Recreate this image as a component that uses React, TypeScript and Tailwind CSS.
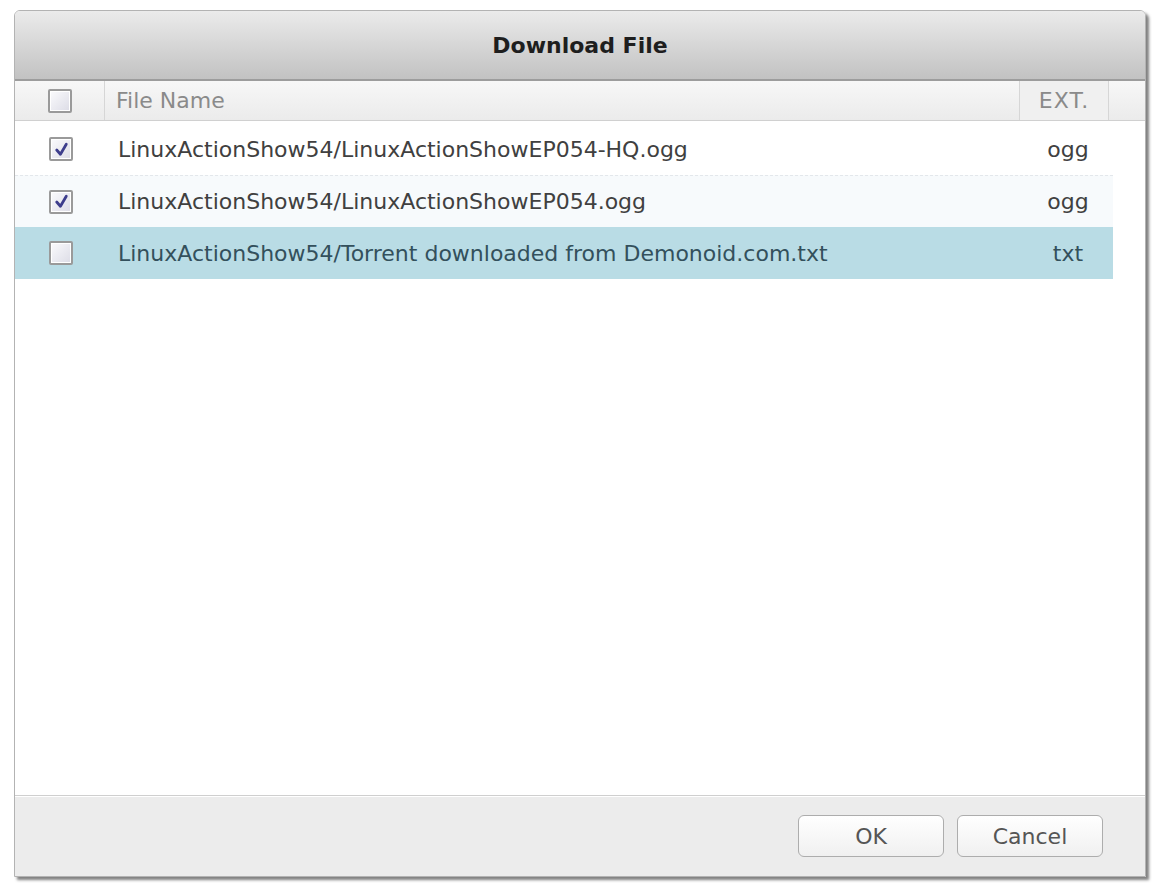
import React, { useState } from 'react';

interface FileRow {
  id: number;
  name: string;
  ext: string;
}

const files: FileRow[] = [
  { id: 1, name: 'LinuxActionShow54/LinuxActionShowEP054-HQ.ogg', ext: 'ogg' },
  { id: 2, name: 'LinuxActionShow54/LinuxActionShowEP054.ogg', ext: 'ogg' },
  { id: 3, name: 'LinuxActionShow54/Torrent downloaded from Demonoid.com.txt', ext: 'txt' },
];

const Check: React.FC<{ checked: boolean; onClick?: () => void }> = ({ checked, onClick }) => (
  <span
    onClick={onClick}
    className="flex h-[24px] w-[24px] cursor-pointer items-center justify-center rounded-[2px] border-2 border-[#9a9a9a] bg-gradient-to-br from-[#fbfbfd] to-[#dcdce6] shadow-[inset_0_0_0_1px_#ffffff]"
  >
    {checked && (
      <svg width="17" height="17" viewBox="0 0 16 16">
        <path d="M3.5 8.5 L7 12.5 L12.5 3" fill="none" stroke="#3d3d8c" strokeWidth="2.6" strokeLinecap="round" strokeLinejoin="round" />
      </svg>
    )}
  </span>
);

const App: React.FC = () => {
  const [checked, setChecked] = useState<Record<number, boolean>>({ 1: true, 2: true, 3: false });
  const selectedId = 3;

  return (
    <div className="h-[890px] w-[1156px] bg-white pl-[14px] pt-[10px]" style={{ fontFamily: '"DejaVu Sans", Verdana, sans-serif' }}>
      <div className="flex h-[867px] w-[1132px] flex-col overflow-hidden rounded-t-[6px] border border-[#b3b3b3] shadow-[3px_3px_3px_rgba(0,0,0,0.5)]">
        {/* Title bar */}
        <div className="flex h-[70px] shrink-0 items-center justify-center border-b-2 border-[#9c9c9c] bg-gradient-to-b from-[#ebebeb] to-[#c2c2c2] text-[22px] font-bold text-[#1e1e1e]">
          Download File
        </div>

        {/* Header */}
        <div className="flex h-[40px] shrink-0 items-center border-b border-[#d0d0d0] bg-gradient-to-b from-[#f7f7f7] to-[#ebebeb] text-[22px] text-[#8a8a8a]">
          <div className="flex h-full w-[90px] items-center justify-center border-r border-[#d6d6d6]">
            <Check checked={false} />
          </div>
          <div className="flex-1 pl-[11px]">File Name</div>
          <div className="flex h-full w-[90px] items-center justify-center border-x border-[#d6d6d6] bg-[#f0f0f0] tracking-[1px]">EXT.</div>
          <div className="w-[36px]" />
        </div>

        {/* Rows */}
        <div className="flex-1 bg-white pt-[2px]">
          {files.map((f, i) => (
            <div
              key={f.id}
              className={
                'flex h-[52px] w-[1098px] items-center text-[22px] ' +
                (f.id === selectedId
                  ? 'bg-[#b9dce5] text-[#33505c]'
                  : i % 2 === 1
                  ? 'border-t border-dashed border-[#e3e7eb] bg-[#f7fafc] text-[#404040]'
                  : 'bg-white text-[#404040]')
              }
            >
              <div className="flex w-[90px] justify-center pl-[2px]">
                <Check checked={!!checked[f.id]} onClick={() => setChecked({ ...checked, [f.id]: !checked[f.id] })} />
              </div>
              <div className="flex-1 pl-[13px]">{f.name}</div>
              <div className="w-[90px] text-center">{f.ext}</div>
            </div>
          ))}
        </div>

        {/* Footer */}
        <div className="flex h-[81px] shrink-0 items-center justify-end gap-[13px] border-t border-[#cfcfcf] bg-[#ececec] pr-[42px] shadow-[inset_0_1px_0_#ffffff]">
          <button className="h-[42px] w-[146px] rounded-[6px] border border-[#adadad] bg-gradient-to-b from-[#ffffff] to-[#f0f0f0] text-[22px] text-[#555555]">
            OK
          </button>
          <button className="h-[42px] w-[146px] rounded-[6px] border border-[#adadad] bg-gradient-to-b from-[#ffffff] to-[#f0f0f0] text-[22px] text-[#555555]">
            Cancel
          </button>
        </div>
      </div>
    </div>
  );
};

export default App;
